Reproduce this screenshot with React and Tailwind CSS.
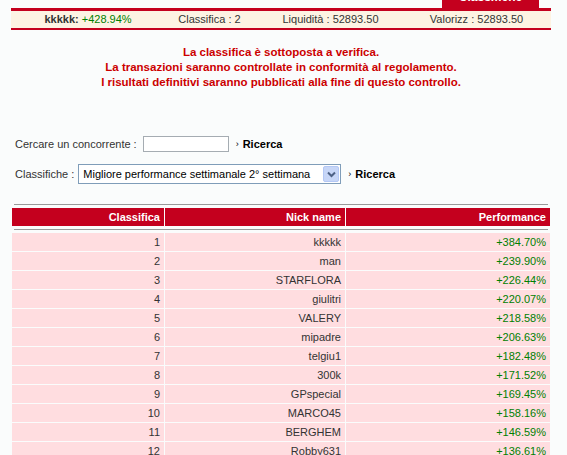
import React from "react";

const rows = [
  { pos: 1, nick: "kkkkk", perf: "+384.70%" },
  { pos: 2, nick: "man", perf: "+239.90%" },
  { pos: 3, nick: "STARFLORA", perf: "+226.44%" },
  { pos: 4, nick: "giulitri", perf: "+220.07%" },
  { pos: 5, nick: "VALERY", perf: "+218.58%" },
  { pos: 6, nick: "mipadre", perf: "+206.63%" },
  { pos: 7, nick: "telgiu1", perf: "+182.48%" },
  { pos: 8, nick: "300k", perf: "+171.52%" },
  { pos: 9, nick: "GPspecial", perf: "+169.45%" },
  { pos: 10, nick: "MARCO45", perf: "+158.16%" },
  { pos: 11, nick: "BERGHEM", perf: "+146.59%" },
  { pos: 12, nick: "Robby631", perf: "+136.61%" },
];

const SearchLink = () => (
  <span className="flex items-center gap-[4px] text-black">
    <span className="text-[9px] leading-none">›</span>
    <span className="font-bold">Ricerca</span>
  </span>
);

export default function App() {
  return (
    <div className="h-[455px] overflow-hidden bg-[#fafcfc] font-['Liberation_Sans',Arial,sans-serif] text-[11px] text-[#333]">
      <div className="ml-[11px] w-[540px]">
        {/* tab */}
        <div className="flex justify-end pr-[12px]">
          <div className="h-[8px] w-[97px] overflow-hidden bg-[#c4001e] text-center">
            <div className="-mt-[10px] text-[12px] leading-[14px] font-bold text-white">Classifiche</div>
          </div>
        </div>

        {/* account bar */}
        <div className="flex h-[22px] items-center border-t-[3px] border-b-2 border-[#c4001e] bg-[#fdf3e3]">
          <div className="w-[154px] text-center">
            <span className="font-bold">kkkkk:</span> <span className="text-[#008000]">+428.94%</span>
          </div>
          <div className="w-[89px] text-center">Classifica : 2</div>
          <div className="w-[153px] text-center">Liquidità : 52893.50</div>
          <div className="flex-1 pr-[5px] text-center">Valorizz : 52893.50</div>
        </div>

        {/* notice */}
        <div className="mt-[15px] text-center text-[11.5px] leading-[15px] font-bold text-[#cc0000]">
          <p>La classifica è sottoposta a verifica.</p>
          <p>La transazioni saranno controllate in conformità al regolamento.</p>
          <p>I risultati definitivi saranno pubblicati alla fine di questo controllo.</p>
        </div>
      </div>

      {/* search */}
      <div className="mt-[46px] pl-[15px]">
        <div className="flex h-[16px] items-center">
          <span>Cercare un concorrente :</span>
          <div className="ml-[6px] h-[16px] w-[86px] border border-[#a5acb2] bg-white" />
          <div className="ml-[7px]">
            <SearchLink />
          </div>
        </div>
        <div className="mt-[12px] flex h-[20px] items-center">
          <span>Classifiche :</span>
          <div className="ml-[4px] flex h-[20px] w-[263px] items-center border border-[#7f9db9] bg-white pl-[4px] pr-px text-black">
            <span className="flex-1">Migliore performance settimanale 2° settimana</span>
            <div className="flex h-[16px] w-[16px] items-center justify-center rounded-[2px] border border-[#b4c8f5] bg-[#c7d6f7]">
              <svg width="9" height="7" viewBox="0 0 9 7">
                <path d="M1 1.5 L4.5 5 L8 1.5" fill="none" stroke="#4d6185" strokeWidth="2" />
              </svg>
            </div>
          </div>
          <div className="ml-[7px]">
            <SearchLink />
          </div>
        </div>
      </div>

      {/* ranking table */}
      <div className="ml-[12px] w-[538px]">
        <div className="mx-[2px] mt-[20px] h-px bg-[#999]" />
        <div className="mt-[3px] grid grid-cols-[152px_180px_204px] gap-x-px">
          {["Classifica", "Nick name", "Performance"].map((h) => (
            <div
              key={h}
              className="flex h-[18px] items-center justify-end bg-[#c4001e] pr-[4px] font-bold text-white"
            >
              {h}
            </div>
          ))}
        </div>
        <div className="mx-[2px] mt-[3px] h-px bg-[#999]" />
        <div className="mt-[3px] grid grid-cols-[152px_180px_204px] gap-px">
          {rows.map((r) => (
            <React.Fragment key={r.pos}>
              <div className="flex h-[18px] items-center justify-end bg-[#ffdde0] pr-[4px]">{r.pos}</div>
              <div className="flex h-[18px] items-center justify-end bg-[#ffdde0] pr-[4px]">{r.nick}</div>
              <div className="flex h-[18px] items-center justify-end bg-[#ffdde0] pr-[4px] text-[#008000]">
                {r.perf}
              </div>
            </React.Fragment>
          ))}
        </div>
      </div>
    </div>
  );
}
